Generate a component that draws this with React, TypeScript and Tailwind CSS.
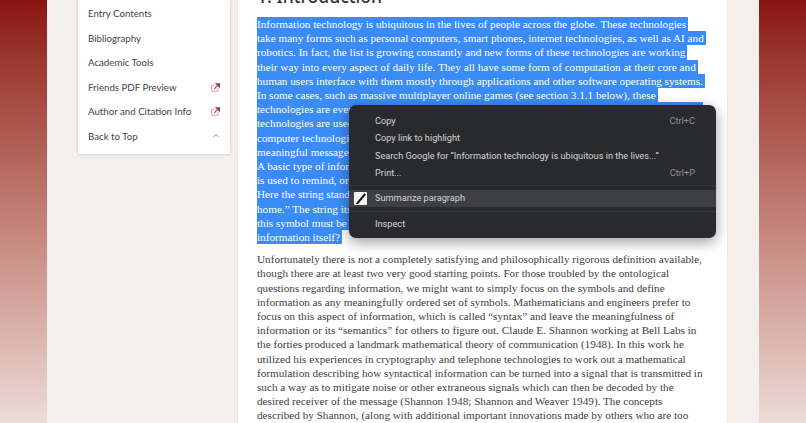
const selected = [
  "Information technology is ubiquitous in the lives of people across the globe. These technologies",
  "take many forms such as personal computers, smart phones, internet technologies, as well as AI and",
  "robotics. In fact, the list is growing constantly and new forms of these technologies are working",
  "their way into every aspect of daily life. They all have some form of computation at their core and",
  "human users interface with them mostly through applications and other software operating systems.",
  "In some cases, such as massive multiplayer online games (see section 3.1.1 below), these",
  "technologies are even opening new forms of interaction between human beings and their machines.",
  "technologies are used to manipulate and present information to the people who rely upon them",
  "computer technologies and they all depend on information to function, so what is the nature of",
  "meaningful messages that move through these systems every day, and how are they understood?",
  "A basic type of information is the kind that takes the form of a simple string of symbols",
  "is used to remind, or to inform, the reader of something that they might otherwise forget.",
  "Here the string stands in for a rather more complicated message, such as “remember to go",
  "home.” The string itself is not the message but it does carry meaning for the agent, and",
  "this symbol must be interpreted by someone before it can mean anything at all, so is it",
  "information itself?",
];

const body = [
  "Unfortunately there is not a completely satisfying and philosophically rigorous definition available,",
  "though there are at least two very good starting points. For those troubled by the ontological",
  "questions regarding information, we might want to simply focus on the symbols and define",
  "information as any meaningfully ordered set of symbols. Mathematicians and engineers prefer to",
  "focus on this aspect of information, which is called “syntax” and leave the meaningfulness of",
  "information or its “semantics” for others to figure out. Claude E. Shannon working at Bell Labs in",
  "the forties produced a landmark mathematical theory of communication (1948). In this work he",
  "utilized his experiences in cryptography and telephone technologies to work out a mathematical",
  "formulation describing how syntactical information can be turned into a signal that is transmitted in",
  "such a way as to mitigate noise or other extraneous signals which can then be decoded by the",
  "desired receiver of the message (Shannon 1948; Shannon and Weaver 1949). The concepts",
  "described by Shannon, (along with additional important innovations made by others who are too",
];

const nav = [
  { label: "Entry Contents" },
  { label: "Bibliography" },
  { label: "Academic Tools" },
  { label: "Friends PDF Preview", icon: "link" },
  { label: "Author and Citation Info", icon: "link" },
  { label: "Back to Top", icon: "up" },
];

function LinkIcon() {
  return (
    <svg width="9" height="9" viewBox="0 0 10 10" fill="none">
      <path d="M7.6 5.6V8.4a.9.9 0 0 1-.9.9H1.5a.9.9 0 0 1-.9-.9V3.3a.9.9 0 0 1 .9-.9h2.8" stroke="#c68d92" strokeWidth="0.9" />
      <path d="M3.6 6.6 7.2 2.9 M5.8 0.8h3.6v3.6z" stroke="#a13c46" strokeWidth="1.2" fill="#a13c46" />
    </svg>
  );
}

function UpIcon() {
  return (
    <svg width="8" height="6" viewBox="0 0 8 6" fill="none" className="text-[#8d6a6e]">
      <path d="M1.5 4 4 1.6 6.5 4" stroke="currentColor" strokeWidth="0.9" />
    </svg>
  );
}

function SummarizeIcon() {
  return (
    <svg width="13" height="13" viewBox="0 0 13 13" className="shrink-0">
      <rect width="13" height="13" rx="1" fill="#f4f4f4" />
      <path d="M1.5 12 10.4 1.2 12 2.6 4.2 12z" fill="#111" />
    </svg>
  );
}

function MenuItem({ label, shortcut }: { label: string; shortcut?: string }) {
  return (
    <div className="flex h-[17.4px] items-center justify-between pl-[26px] pr-[21px]">
      <span>{label}</span>
      {shortcut && <span className="text-[#8f9094]">{shortcut}</span>}
    </div>
  );
}

export default function App() {
  return (
    <div className="flex h-[423px] w-[806px] overflow-hidden bg-[#f3efec]">
      {/* red side band */}
      <div className="h-full w-[47px] shrink-0 bg-gradient-to-b from-[#8a1212] to-[#ecdcd8]" />

      {/* sidebar */}
      <div className="h-full w-[190px] shrink-0 pl-[31px] pr-[7px]">
        <div className="-mt-[1px] bg-white pt-[2px] pb-[5px] shadow-[0_0_3px_rgba(0,0,0,0.18)] font-['Lato',sans-serif] text-[9.7px] text-[#444]">
          {nav.map((item) => (
            <div key={item.label} className="flex h-[24.6px] items-center justify-between pl-[10px] pr-[10px]">
              <span>{item.label}</span>
              {item.icon === "link" && <LinkIcon />}
              {item.icon === "up" && <UpIcon />}
            </div>
          ))}
        </div>
      </div>

      {/* article */}
      <div className="relative h-full w-[491px] shrink-0 overflow-hidden border-x border-[#e9e7e5] bg-white pl-[19px]">
        <h2 className="-mt-[12px] h-[29px] font-['Noto_Sans',sans-serif] text-[17.6px] font-medium leading-[16px] text-[#333]">
          1. Introduction
        </h2>

        <div className="font-['Liberation_Serif',serif] text-[11.2px] leading-[14.2px] whitespace-nowrap">
          {selected.map((line) => (
            <div key={line} className="w-fit bg-[#3b8bf6] pr-[2px] text-white last:pr-0">
              {line}
            </div>
          ))}

          <div className="mt-[8px] text-[#3d3d3d]">
            {body.map((line) => (
              <div key={line}>{line}</div>
            ))}
          </div>
        </div>

        {/* context menu */}
        <div className="absolute left-[111px] top-[105px] h-[133px] w-[367px] rounded-[7px] bg-[#292a2d] pt-[7px] font-['Roboto',sans-serif] text-[9.2px] text-[#d4d5d8] shadow-[0_4px_14px_rgba(0,0,0,0.4)]">
          <MenuItem label="Copy" shortcut="Ctrl+C" />
          <MenuItem label="Copy link to highlight" />
          <MenuItem label="Search Google for “Information technology is ubiquitous in the lives...”" />
          <MenuItem label="Print..." shortcut="Ctrl+P" />
          <div className="mt-[3px] h-px bg-[#38393c]" />
          <div className="mt-[4px] flex h-[17px] items-center gap-[8px] bg-[#3e3f42] pl-[5px]">
            <SummarizeIcon />
            <span>Summarize paragraph</span>
          </div>
          <div className="mt-[4px] h-px bg-[#38393c]" />
          <div className="mt-[4px]">
            <MenuItem label="Inspect" />
          </div>
        </div>
      </div>

      <div className="h-full w-[31px] shrink-0" />

      {/* red side band */}
      <div className="h-full flex-1 bg-gradient-to-b from-[#8a1212] to-[#ecdcd8]" />
    </div>
  );
}
